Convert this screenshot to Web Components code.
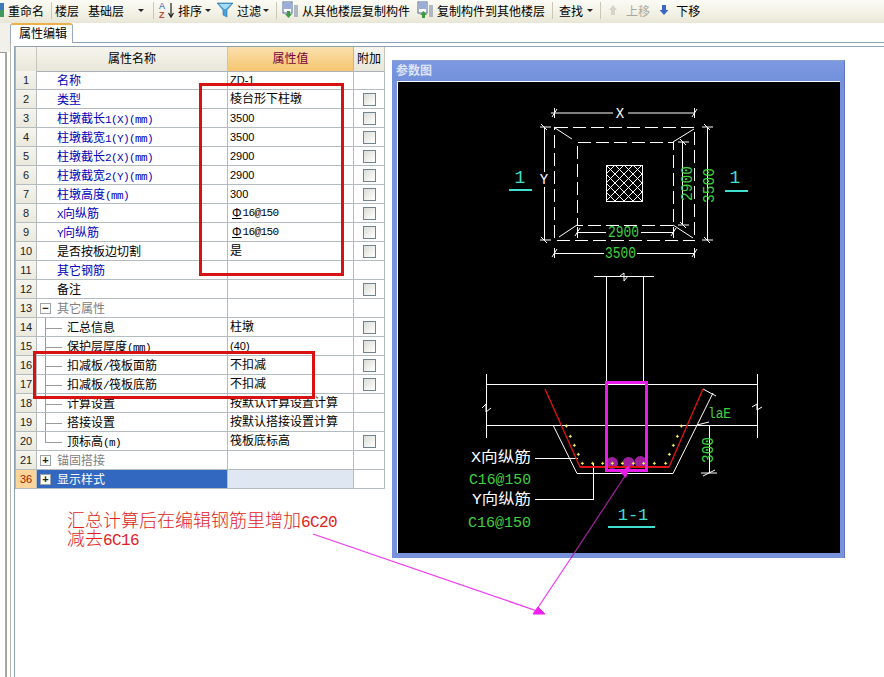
<!DOCTYPE html>
<html lang="zh">
<head>
<meta charset="utf-8">
<title>属性编辑</title>
<style>
    html, body { margin: 0; height: 677px; overflow: hidden; }
    body {
        position: relative;
        font: 12px "Liberation Sans", "Noto Sans CJK SC", sans-serif;
        color: #000;
        background:
            linear-gradient(#a8a89c, #a8a89c) 5px 52px / 2px 100% no-repeat,
            linear-gradient(#b4b4b0, #b4b4b0) 10px 28px / 1px 100% no-repeat,
            linear-gradient(#9a9a9a, #9a9a9a) 0 52px / 5px 1px no-repeat,
            linear-gradient(#f1f0ea, #f1f0ea) 0 23px / 10px 29px no-repeat,
            #fff;
    }
</style>
</head>
<body>
<app-toolbar></app-toolbar>
<tab-strip label="属性编辑"></tab-strip>
<main-area>
    <prop-grid>
        <prop-row num="1" name="名称" kind="link" value="ZD-1"></prop-row>
        <prop-row num="2" name="类型" kind="link" value="棱台形下柱墩" check></prop-row>
        <prop-row num="3" name="柱墩截长1(X)(mm)" kind="link" value="3500" check></prop-row>
        <prop-row num="4" name="柱墩截宽1(Y)(mm)" kind="link" value="3500" check></prop-row>
        <prop-row num="5" name="柱墩截长2(X)(mm)" kind="link" value="2900" check></prop-row>
        <prop-row num="6" name="柱墩截宽2(Y)(mm)" kind="link" value="2900" check></prop-row>
        <prop-row num="7" name="柱墩高度(mm)" kind="link" value="300" check></prop-row>
        <prop-row num="8" name="X向纵筋" kind="link" value="16@150" rebar check></prop-row>
        <prop-row num="9" name="Y向纵筋" kind="link" value="16@150" rebar check></prop-row>
        <prop-row num="10" name="是否按板边切割" value="是" check></prop-row>
        <prop-row num="11" name="其它钢筋" kind="link"></prop-row>
        <prop-row num="12" name="备注" check></prop-row>
        <prop-row num="13" name="其它属性" kind="group" toggle="−"></prop-row>
        <prop-row num="14" name="汇总信息" kind="child" value="柱墩" check></prop-row>
        <prop-row num="15" name="保护层厚度(mm)" kind="child" value="(40)" check></prop-row>
        <prop-row num="16" name="扣减板/筏板面筋" kind="child" value="不扣减" check></prop-row>
        <prop-row num="17" name="扣减板/筏板底筋" kind="child" value="不扣减" check></prop-row>
        <prop-row num="18" name="计算设置" kind="child" value="按默认计算设置计算"></prop-row>
        <prop-row num="19" name="搭接设置" kind="child" value="按默认搭接设置计算"></prop-row>
        <prop-row num="20" name="顶标高(m)" kind="child last" value="筏板底标高" check></prop-row>
        <prop-row num="21" name="锚固搭接" kind="group" toggle="+"></prop-row>
        <prop-row num="36" name="显示样式" kind="selected" toggle="+"></prop-row>
    </prop-grid>
    <param-panel heading="参数图">
        <cad-drawing></cad-drawing>
    </param-panel>
</main-area>
<note-overlay></note-overlay>

<script>
    class AppToolbar extends HTMLElement {
        constructor() {
            super();
            this.attachShadow({ mode: "open" });
        }

        connectedCallback() {
            const caret = '<i class="caret"></i>';
            this.shadowRoot.innerHTML = `
                <style>
                    :host {
                        display: flex;
                        align-items: center;
                        height: 23px;
                        box-sizing: border-box;
                        padding-bottom: 3px;
                        overflow: hidden;
                        white-space: nowrap;
                        background: linear-gradient(#fbfbf5, #f4f3e8 50%, #e8e6d6);
                    }
                    svg { display: block; flex: none; }
                    span { flex: none; }
                    .sep { width: 1px; height: 17px; background: #c9c7b6; flex: none; }
                    .caret {
                        flex: none; width: 0; height: 0;
                        border: 3px solid transparent; border-top: 3px solid #222; border-bottom: 0;
                    }
                    .combo { width: 50px; margin-left: 9px; }
                    .off { color: #a9a9a0; }
                </style>
                <svg width="5" height="16" viewBox="0 0 5 16" style="margin-right:3px">
                    <rect x="-6" y="1" width="10" height="9" fill="#3f78b8"/><rect x="-2" y="8" width="6" height="7" fill="#3f9a5a"/>
                </svg>
                <span>重命名</span>
                <i class="sep" style="margin-left:7px"></i>
                <span style="margin-left:3px">楼层</span>
                <span class="combo">基础层</span>
                ${caret}
                <i class="sep" style="margin-left:9px"></i>
                <svg width="18" height="18" viewBox="0 0 18 18" style="margin-left:4px">
                    <text x="1" y="8" font-size="9" font-family="Liberation Sans" fill="#2a55b0">A</text>
                    <text x="1" y="17" font-size="9" font-family="Liberation Sans" font-weight="700" fill="#b8503a">Z</text>
                    <path d="M13 2v13M10.500 12l2.500 4 2.500-4" fill="none" stroke="#222" stroke-width="1.200"/>
                </svg>
                <span style="margin-left:2px">排序</span>
                <i class="caret" style="margin-left:3px"></i>
                <svg width="16" height="16" viewBox="0 0 16 16" style="margin-left:6px">
                    <path d="M0 1h16l-6 7v7l-4-2V8z" fill="#4aa0d8" stroke="#2c70a8" stroke-width=".6"/>
                    <path d="M2 2h12l-5 5H7z" fill="#a8dcf4"/>
                </svg>
                <span style="margin-left:4px">过滤</span>
                <i class="caret" style="margin-left:2px"></i>
                <i class="sep" style="margin-left:7px"></i>
                <svg width="17" height="18" viewBox="0 0 17 18" style="margin-left:5px">
                    <rect x="1" y="1" width="9" height="11" fill="#fff" stroke="#49689c"/>
                    <path d="M2 3h7M2 5h7M2 7h7" stroke="#3558b0"/>
                    <path d="M5 10h3v3h2l-3.500 4-3.500-4h2z" fill="#3f9a3f"/>
                    <path d="M12 5h4M12 7h4M12 9h4M12 11h4M12 13h4M12 15h4" stroke="#6a7f96"/>
                </svg>
                <span style="margin-left:3px">从其他楼层复制构件</span>
                <svg width="17" height="18" viewBox="0 0 17 18" style="margin-left:7px">
                    <rect x="1" y="1" width="9" height="11" fill="#fff" stroke="#49689c"/>
                    <path d="M2 3h7M2 5h7M2 7h7" stroke="#3558b0"/>
                    <path d="M5 17h3v-3h2l-3.500-4-3.500 4h2z" fill="#3f9a3f"/>
                    <path d="M12 5h4M12 7h4M12 9h4M12 11h4M12 13h4M12 15h4" stroke="#6a7f96"/>
                </svg>
                <span style="margin-left:3px">复制构件到其他楼层</span>
                <i class="sep" style="margin-left:7px"></i>
                <span style="margin-left:6px">查找</span>
                <i class="caret" style="margin-left:4px"></i>
                <i class="sep" style="margin-left:7px"></i>
                <svg width="10" height="12" viewBox="0 0 10 12" style="margin-left:7px">
                    <path d="M5 1l4 5H7v5H3V6H1z" fill="#d4d4ca"/>
                </svg>
                <span class="off" style="margin-left:8px">上移</span>
                <svg width="10" height="12" viewBox="0 0 10 12" style="margin-left:9px">
                    <path d="M3 1h4v5h2.500L5 11 .5 6H3z" fill="#3c66c4"/>
                </svg>
                <span style="margin-left:7px">下移</span>
            `;
        }
    }
    customElements.define("app-toolbar", AppToolbar);

    class TabStrip extends HTMLElement {
        constructor() {
            super();
            this.attachShadow({ mode: "open" });
        }

        connectedCallback() {
            this.shadowRoot.innerHTML = `
                <style>
                    :host {
                        display: flex;
                        height: 20px;
                        box-sizing: border-box;
                        padding-left: 10px;
                    }
                    .line { flex: 1; border-bottom: 1px solid #8fa0b0; }
                    .tab {
                        width: 63px;
                        box-sizing: border-box;
                        height: 20px;
                        padding: 2px 0 0 8px;
                        background: #fff;
                        border: 1px solid #9aaab8;
                        border-bottom: 0;
                        border-top: 2px solid #eeb04a;
                        border-radius: 3px 3px 0 0;
                        line-height: 15px;
                    }
                </style>
                <div class="tab">${this.getAttribute("label")}</div>
                <div class="line"></div>
            `;
        }
    }
    customElements.define("tab-strip", TabStrip);

    class MainArea extends HTMLElement {
        constructor() {
            super();
            this.attachShadow({ mode: "open" });
            this.shadowRoot.innerHTML = `
                <style>
                    :host {
                        display: flex;
                        align-items: flex-start;
                        gap: 7px;
                        margin: 3px 0 0 14px;
                        height: 631px;
                        border-top: 1px solid #8fa0b0;
                        border-left: 1px solid #8fa5b8;
                    }
                </style>
                <slot></slot>
            `;
        }
    }
    customElements.define("main-area", MainArea);

    class PropGrid extends HTMLElement {
        constructor() {
            super();
            this.attachShadow({ mode: "open" });
            this.shadowRoot.innerHTML = `
                <style>
                    :host {
                        display: block;
                        flex: none;
                        width: 369px;
                        border-left: 1px solid #a8b4bc;
                    }
                    .head {
                        display: grid;
                        grid-template-columns: 21px 191px 126px 31px;
                        height: 24px;
                        box-sizing: border-box;
                        text-align: center;
                        line-height: 24px;
                    }
                    .head div {
                        box-sizing: border-box;
                        background: linear-gradient(#f6f5ee, #e9e7d9);
                        border-right: 1px solid #c8c6b8;
                        border-bottom: 1px solid #aab2b8;
                    }
                    .head .on {
                        background: linear-gradient(#fae0ac, #f5c670);
                        color: #7a0038;
                        border-right-color: #d8b070;
                    }
                </style>
                <div class="head">
                    <div></div>
                    <div>属性名称</div>
                    <div class="on">属性值</div>
                    <div>附加</div>
                </div>
                <slot></slot>
            `;
        }
    }
    customElements.define("prop-grid", PropGrid);

    class PropRow extends HTMLElement {
        constructor() {
            super();
            this.attachShadow({ mode: "open" });
        }

        // Latin runs are narrower than the CJK text next to them
        wrapLatin(text) {
            return text.replace(/[A-Za-z0-9()\-@\/]+/g, (run) => `<span class="latin">${run}</span>`);
        }

        connectedCallback() {
            const kinds = this.getAttribute("kind") || "";
            const name = this.getAttribute("name") || "";
            const value = this.getAttribute("value") || "";
            const toggle = this.getAttribute("toggle");
            const selected = kinds.includes("selected") ? "selected" : "";
            const tree = kinds.includes("child") ? '<span class="tree"></span>' : "";
            const box = toggle ? `<span class="box">${toggle}</span>` : "";
            const valueHtml = this.hasAttribute("rebar")
                ? `<span class="rebar">Φ</span><span class="mono">${value}</span>`
                : this.wrapLatin(value);
            this.shadowRoot.innerHTML = `
                <style>
                    :host {
                        display: grid;
                        grid-template-columns: 21px 191px 126px 31px;
                        grid-template-rows: 19px;
                        height: 19px;
                        line-height: 16px;
                    }
                    div {
                        box-sizing: border-box;
                        height: 19px;
                        overflow: hidden;
                        display: flex;
                        align-items: center;
                        border-right: 1px solid #b4bcc0;
                        border-bottom: 1px solid #b4bcc0;
                        white-space: nowrap;
                    }
                    .num {
                        justify-content: center;
                        font-size: 11px;
                        color: #222;
                        background: linear-gradient(#f6f5ee, #ebe9dc);
                    }
                    .num.selected { background: #fbd59a; color: #a02000; }
                    .name { padding-left: 20px; }
                    .name > span:last-child { padding-top: 2px; }
                    .name.link { color: #0000b8; }
                    .name.group { padding-left: 3px; color: #808080; }
                    .name.child { padding-left: 8px; }
                    .name.selected { padding-left: 3px; background: #3268c0; color: #fff; }
                    .value { padding-left: 2px; }
                    .value.selected { background: #dfe7f2; }
                    .extra { justify-content: center; padding-left: 1px; }
                    .latin, .mono {
                        font: 11px/16px "Liberation Mono", monospace;
                        letter-spacing: -.6px;
                    }
                    .value .latin { font: 11px/16px "Liberation Sans", sans-serif; letter-spacing: 0; }
                    .rebar {
                        font: 12px/16px "Liberation Sans", sans-serif;
                        text-decoration: underline;
                        margin: 0 1px 0 2px;
                    }
                    .tree {
                        flex: none;
                        align-self: stretch;
                        width: 22px;
                        background:
                            linear-gradient(#9a9a9a, #9a9a9a) 0 0 / 1px ${kinds.includes("last") ? "10px" : "100%"} no-repeat,
                            linear-gradient(#9a9a9a, #9a9a9a) 0 10px / 17px 1px no-repeat;
                    }
                    .box {
                        flex: none;
                        width: 11px;
                        height: 11px;
                        margin-right: 6px;
                        box-sizing: border-box;
                        border: 1px solid #a0a4a8;
                        background: #fbfbf8;
                        color: #222;
                        font: 700 11px/9px "Liberation Sans", sans-serif;
                        text-align: center;
                    }
                    .check {
                        width: 13px;
                        height: 13px;
                        box-sizing: border-box;
                        border: 1px solid #71838f;
                        background: linear-gradient(135deg, #d9dcd8, #f6f6f2 70%, #fff);
                    }
                </style>
                <div class="num ${selected}">${this.getAttribute("num")}</div>
                <div class="name ${kinds}">${tree}${box}<span>${this.wrapLatin(name)}</span></div>
                <div class="value ${selected}">${valueHtml}</div>
                <div class="extra">${this.hasAttribute("check") ? '<span class="check"></span>' : ""}</div>
            `;
        }
    }
    customElements.define("prop-row", PropRow);

    class ParamPanel extends HTMLElement {
        constructor() {
            super();
            this.attachShadow({ mode: "open" });
        }

        connectedCallback() {
            this.shadowRoot.innerHTML = `
                <style>
                    :host {
                        display: block;
                        flex: none;
                        width: 453px;
                        height: 498px;
                        margin-top: 13px;
                        box-sizing: border-box;
                        padding: 0 5px 5px;
                        background: #7893dc;
                        border-right: 1px solid #5f74c4;
                        border-top: 1px solid #8aa0d0;
                    }
                    .title {
                        height: 20px;
                        margin: 0 -5px;
                        padding-left: 4px;
                        line-height: 20px;
                        font-weight: 700;
                        color: #dde4f6;
                        background: linear-gradient(#7d99e2, #7390dc);
                    }
                </style>
                <div class="title">${this.getAttribute("heading")}</div>
                <slot></slot>
            `;
        }
    }
    customElements.define("param-panel", ParamPanel);

    class CadDrawing extends HTMLElement {
        constructor() {
            super();
            this.attachShadow({ mode: "open" });
        }

        connectedCallback() {
            // drawing coordinates are the page coordinates of the plan
            const dots = [[379, 468], [391, 499], [403, 526], [415, 553], [427, 580], [458, 580], [488, 580],
                [517, 580], [547, 580], [580, 580], [611, 580], [643, 580], [677, 580], [688, 553], [700, 526],
                [712, 499], [724, 468]]
                .map(([x, y]) => {
                    const px = 440 + x / 3;
                    const py = 270 + y / 3;
                    return `M${px - 1.5} ${py}h3M${px} ${py - 1.5}v3`;
                }).join("");
            this.shadowRoot.innerHTML = `
                <style>
                    :host {
                        display: block;
                        width: 443px;
                        height: 472px;
                        box-sizing: border-box;
                        background: #000;
                        border-left: 1px solid #fff;
                        border-top: 1px solid #fff;
                    }
                    svg { display: block; }
                    text { font-family: "Liberation Mono", "Noto Sans CJK SC", monospace; }
                    .w { fill: none; stroke: #fff; stroke-width: 1; }
                    .d { fill: none; stroke: #fff; stroke-width: 1; stroke-dasharray: 13 5; }
                </style>
                <svg width="442" height="471" viewBox="398 82 442 471" shape-rendering="crispEdges">
                    <defs>
                        <pattern id="hatch" width="9" height="9" patternUnits="userSpaceOnUse" patternTransform="translate(606 165)">
                            <path d="M0 0L9 9M9 0L0 9" stroke="#fff" stroke-width="1" shape-rendering="auto"/>
                        </pattern>
                    </defs>

                    <!-- plan -->
                    <rect class="d" x="554.500" y="127.500" width="140" height="113"/>
                    <rect class="d" x="577.500" y="142.500" width="96" height="83"/>
                    <rect x="606.500" y="165.500" width="36" height="36" fill="url(#hatch)" stroke="#fff"/>
                    <g class="w" shape-rendering="auto">
                        <path d="M555 128L572 139M694 129L673 142M559 237L577 225M673 225L693 238"/>
                        <path d="M551 113h62M628 113h66M554.500 108v10M694.500 108v10M552 117l5-8M692 117l5-8"/>
                        <path d="M544.500 127v45M544.500 187v53M540 127h11M540 240h11M541 124l6 6M541 237l6 6"/>
                        <path d="M707.500 127v113M702 127h11M702 240h11M704 124l6 6M704 237l6 6"/>
                        <path d="M682.500 142v83M678 142h11M678 225h11M680 139l6 6M680 222l6 6"/>
                        <path d="M577 232.500h29M641 232.500h32M577.500 227v11M673.500 227v11M575 236l5-8M671 236l5-8"/>
                        <path d="M554 253.500h50M637 253.500h57M554.500 248v10M694.500 248v10M552 257l5-8M692 257l5-8"/>
                    </g>
                    <text x="620" y="118" text-anchor="middle" font-size="14" fill="#fff">X</text>
                    <text x="544" y="184" text-anchor="middle" font-size="14" fill="#fff">Y</text>
                    <text x="608" y="237" font-size="16" fill="#3fd23f" textLength="31" lengthAdjust="spacingAndGlyphs">2900</text>
                    <text x="605" y="258" font-size="16" fill="#3fd23f" textLength="31" lengthAdjust="spacingAndGlyphs">3500</text>
                    <text transform="translate(692 201) rotate(-90)" font-size="17" fill="#3fd23f" textLength="35" lengthAdjust="spacingAndGlyphs">2900</text>
                    <text transform="translate(714 203) rotate(-90)" font-size="17" fill="#3fd23f" textLength="35" lengthAdjust="spacingAndGlyphs">3500</text>
                    <text x="520" y="183" text-anchor="middle" font-size="18" fill="#40e0d0">1</text>
                    <text x="735" y="183" text-anchor="middle" font-size="18" fill="#40e0d0">1</text>
                    <path d="M509 189.500h23M725 190.500h23" stroke="#40e0d0" stroke-width="2"/>

                    <!-- section 1-1 -->
                    <g class="w">
                        <path d="M594 276.500h60M606.500 276v108M643.500 276v108"/>
                        <path d="M486 384.500h271M486 425.500h271M486.500 374v64M757.500 374v64"/>
                    </g>
                    <g class="w" shape-rendering="auto">
                        <path d="M620 276l4-3v8l4-5M482 408l4-4v8l5-4M752 407l5-3v6l5-3"/>
                        <path d="M553 425L577 473.500H673L713 393M703 389l13 7"/>
                        <path d="M709.500 425v48M701 473h16M703 476l12-6M697 425l12-3"/>
                    </g>
                    <path d="M535 458.500h43M535 499.500h58.500V463" class="w"/>
                    <g shape-rendering="auto">
                        <circle cx="612" cy="463" r="6" fill="#a0209c"/>
                        <circle cx="628.500" cy="463" r="6" fill="#a0209c"/>
                        <circle cx="640.500" cy="462" r="6" fill="#a0209c"/>
                        <path d="M545 389L580 467H669L703 389" fill="none" stroke="#e01414" stroke-width="1.300"/>
                        <path d="M580 467H669" stroke="#e01414" stroke-width="2"/>
                        <path d="${dots}" stroke="#ffff60" stroke-width="1"/>
                    </g>
                    <rect x="606.500" y="382.500" width="40" height="88" fill="none" stroke="#e81ee8" stroke-width="3"/>
                    <text x="471" y="462" font-size="15" fill="#fff" textLength="60" lengthAdjust="spacingAndGlyphs">X向纵筋</text>
                    <text x="472" y="504" font-size="15" fill="#fff" textLength="59" lengthAdjust="spacingAndGlyphs">Y向纵筋</text>
                    <text x="469" y="484" font-size="15" fill="#3fd23f" textLength="62" lengthAdjust="spacingAndGlyphs">C16@150</text>
                    <text x="468" y="527" font-size="15" fill="#3fd23f" textLength="63" lengthAdjust="spacingAndGlyphs">C16@150</text>
                    <text x="708" y="418" font-size="14" fill="#3fd23f" textLength="23" lengthAdjust="spacingAndGlyphs">laE</text>
                    <text transform="translate(713 463) rotate(-90)" font-size="16" fill="#3fd23f" textLength="26" lengthAdjust="spacingAndGlyphs">300</text>
                    <text x="633" y="520" text-anchor="middle" font-size="17" fill="#40e0d0">1-1</text>
                    <path d="M608 526.500h47" stroke="#40e0d0" stroke-width="2"/>
                </svg>
            `;
        }
    }
    customElements.define("cad-drawing", CadDrawing);

    // Mark-ups somebody drew over the screenshot: they lie on top of everything else
    class NoteOverlay extends HTMLElement {
        constructor() {
            super();
            this.attachShadow({ mode: "open" });
        }

        connectedCallback() {
            this.shadowRoot.innerHTML = `
                <style>
                    :host {
                        position: absolute;
                        left: 0;
                        top: 0;
                        width: 884px;
                        height: 677px;
                        pointer-events: none;
                    }
                    svg { position: absolute; left: 0; top: 0; }
                    .note {
                        position: absolute;
                        left: 67px;
                        top: 510px;
                        font: 300 18px/18px "Noto Sans CJK SC", sans-serif;
                        color: #e11c1c;
                        white-space: nowrap;
                    }
                    .note div { height: 18px; display: flex; align-items: baseline; }
                    .note span { font: 16px/18px "Liberation Mono", monospace; letter-spacing: -.6px; }
                </style>
                <svg width="884" height="677" viewBox="0 0 884 677">
                    <rect x="200.500" y="84.500" width="142" height="190" fill="none" stroke="#d81212" stroke-width="3"/>
                    <rect x="34.500" y="352.500" width="279" height="45" fill="none" stroke="#d81212" stroke-width="3"/>
                    <path d="M627 473L571 558" stroke="#a424a4" stroke-width="1.200"/>
                    <path d="M571 558L535 612M313 534L540 612" stroke="#f038f0" stroke-width="1.200"/>
                    <path d="M533 614H545L538 607z" fill="#f020f0" stroke="#f020f0"/>
                    <path d="M630 465L620 472L626 478z" fill="#e81ee8"/>
                </svg>
                <div class="note">
                    <div>汇总计算后在编辑钢筋里增加<span>6C20</span></div>
                    <div>减去<span>6C16</span></div>
                </div>
            `;
        }
    }
    customElements.define("note-overlay", NoteOverlay);
</script>
</body>
</html>
